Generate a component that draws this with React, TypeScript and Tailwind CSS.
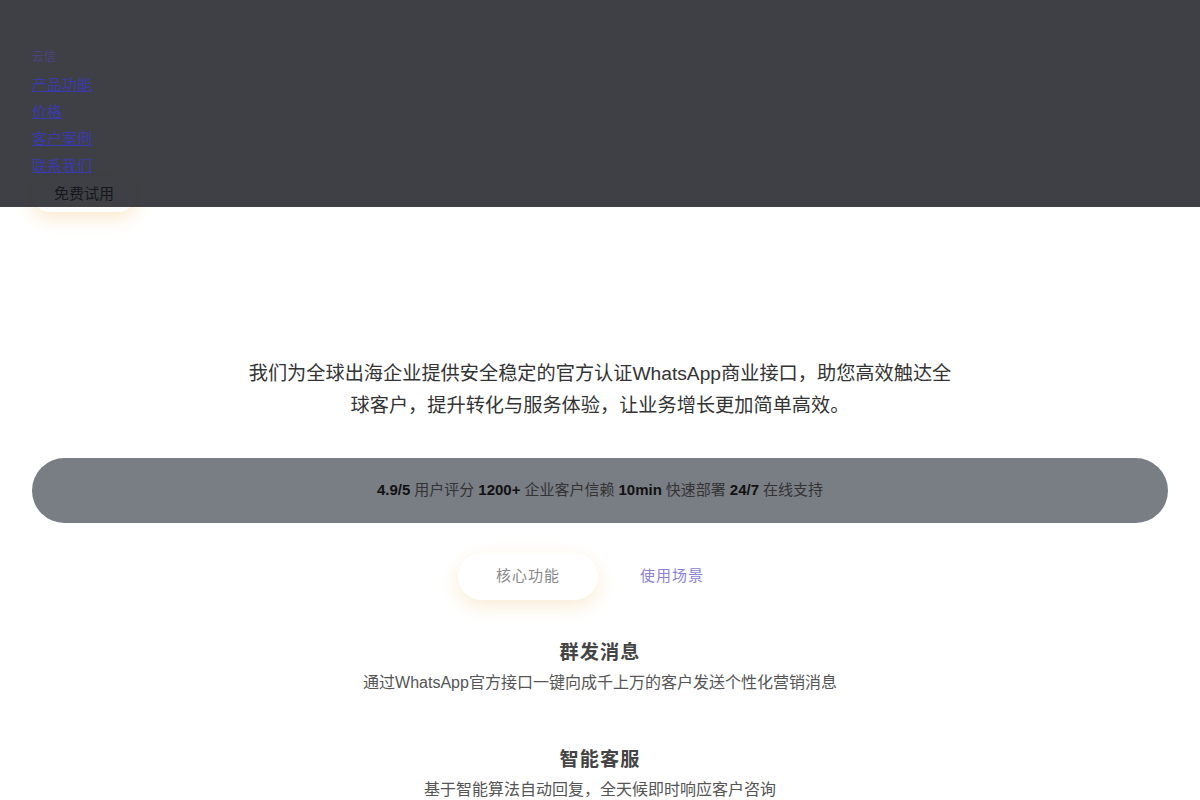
const navLinks = ['产品功能', '价格', '客户案例', '联系我们'];

const stats = [
  { value: '4.9/5', label: '用户评分' },
  { value: '1200+', label: '企业客户信赖' },
  { value: '10min', label: '快速部署' },
  { value: '24/7', label: '在线支持' },
];

const features = [
  { title: '群发消息', desc: '通过WhatsApp官方接口一键向成千上万的客户发送个性化营销消息' },
  { title: '智能客服', desc: '基于智能算法自动回复，全天候即时响应客户咨询' },
  { title: '客户管理', desc: '统一管理客户标签与聊天记录，精准跟进每一位潜在客户' },
];

const Header = () => {
  return (
    <div className="relative">
      <header className="h-[207px] px-8 pt-[48px]">
        <div className="relative z-10 text-[12px] leading-[18px] text-[#4a4280]">云信</div>
        <nav className="relative z-10 mt-[5px] flex flex-col items-start">
          {navLinks.map((link) => (
            <a
              key={link}
              href="#"
              className="h-[27px] text-[15px] leading-[27px] text-[#3a3aac] underline"
            >
              {link}
            </a>
          ))}
        </nav>
        <button className="-mt-[3px] h-9 rounded-full bg-white px-[22px] text-[15px] text-[#333] shadow-[0_6px_18px_rgba(240,190,110,0.35)]">
          免费试用
        </button>
      </header>
      {/* dimming layer over the top bar */}
      <div className="absolute inset-x-0 top-0 h-[207px] bg-[rgba(15,16,22,0.8)]" />
    </div>
  );
};

const App = () => {
  return (
    <div className="min-h-screen bg-white font-['Liberation_Sans','Noto_Sans_CJK_SC',sans-serif] text-[#222]">
      <Header />

      <section className="px-8 pt-[151px]">
        <p className="mx-auto max-w-[720px] text-center text-[19.2px] leading-[32px] text-[#333]">
          我们为全球出海企业提供安全稳定的官方认证WhatsApp商业接口，助您高效触达全球客户，提升转化与服务体验，让业务增长更加简单高效。
        </p>

        <div className="mt-9 flex h-[65px] items-center justify-center gap-1 rounded-full bg-[#797d84] text-[15px] text-[#111]">
          {stats.map((s) => (
            <span key={s.value} className="flex items-center gap-1">
              <b className="font-bold">{s.value}</b>
              <span className="text-[#333]">{s.label}</span>
            </span>
          ))}
        </div>

        <div className="mt-[30px] flex justify-center gap-1">
          <button className="h-[47px] rounded-full bg-white px-[38px] text-[15px] tracking-[1px] text-[#888] shadow-[0_6px_18px_rgba(240,190,110,0.3)]">
            核心功能
          </button>
          <button className="h-[47px] rounded-full px-[38px] text-[15px] tracking-[1px] text-[#8b7fd6]">
            使用场景
          </button>
        </div>

        <div className="mt-[39px] flex flex-col items-center gap-[51px] pb-16 text-center">
          {features.map((f) => (
            <div key={f.title}>
              <h3 className="text-[19.2px] font-semibold leading-[28px] tracking-[1px] text-[#444]">{f.title}</h3>
              <p className="mt-1 text-base leading-6 text-[#555]">{f.desc}</p>
            </div>
          ))}
        </div>
      </section>
    </div>
  );
};

export default App;
